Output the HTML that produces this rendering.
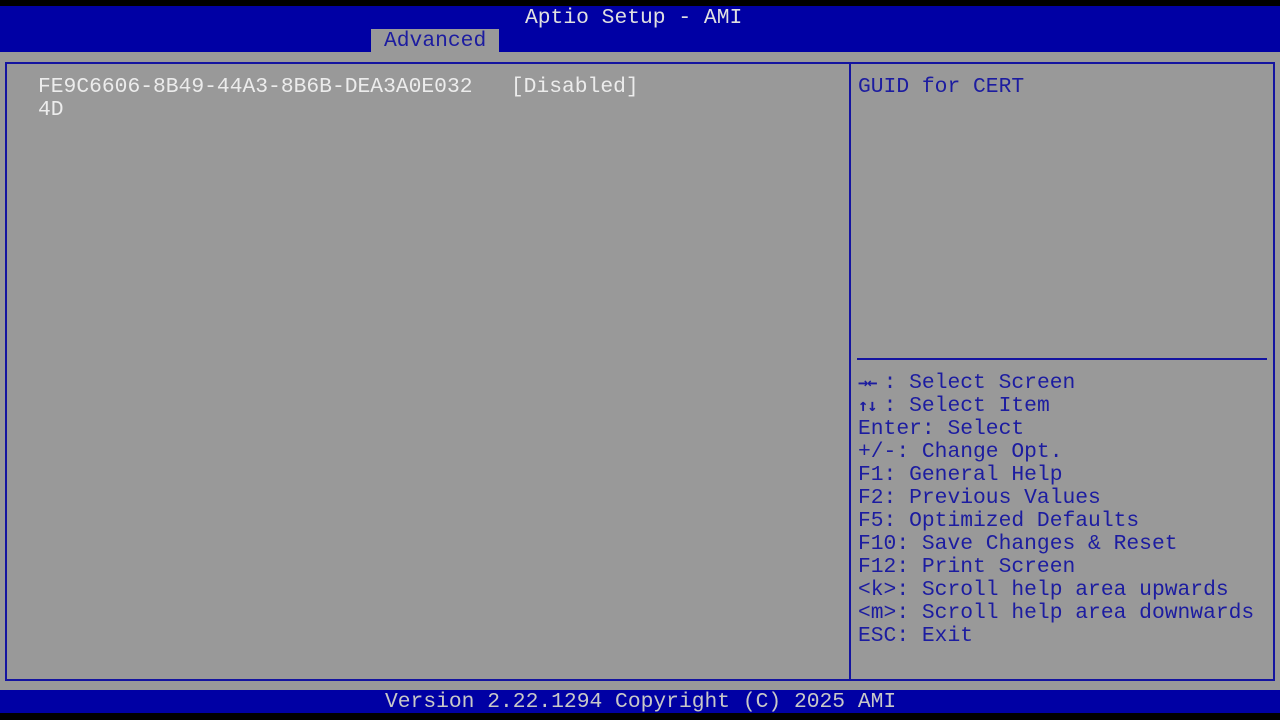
<!DOCTYPE html>
<html><head><style>
body{margin:0;width:1280px;height:720px;background:#000;position:relative;overflow:hidden;font-family:"Liberation Mono","DejaVu Sans Mono",monospace;font-size:21.3px;}
div{position:absolute;}
.t{line-height:23px;white-space:pre;}
.a{display:inline-block;width:25.6px;font-family:"DejaVu Sans Mono",monospace;font-weight:bold;font-size:17px;letter-spacing:-1px;}
</style></head><body>
<div style="left:0;top:6px;width:1280px;height:46px;background:#0000a4"></div>
<div class="t" style="left:525px;top:7px;color:#e0e0e0">Aptio Setup - AMI</div>
<div style="left:371px;top:29px;width:128px;height:23px;background:#999"></div>
<div class="t" style="left:384px;top:30px;color:#1c1ca0">Advanced</div>
<div style="left:0;top:52px;width:1280px;height:638px;background:#999"></div>
<div style="left:5px;top:62px;width:1266px;height:615px;border:2px solid #1414a0"></div>
<div style="left:849px;top:62px;width:2px;height:617px;background:#1414a0"></div>
<div style="left:857px;top:358px;width:410px;height:2px;background:#1414a0"></div>
<div class="t" style="left:38px;top:76px;color:#ececec">FE9C6606-8B49-44A3-8B6B-DEA3A0E032   [Disabled]
4D</div>
<div class="t" style="left:858px;top:76px;color:#1c1ca0">GUID for CERT</div>
<div class="t" style="left:858px;top:372px;color:#1c1ca0"><span class="a">→←</span>: Select Screen
<span class="a">↑↓</span>: Select Item
Enter: Select
+/-: Change Opt.
F1: General Help
F2: Previous Values
F5: Optimized Defaults
F10: Save Changes &amp; Reset
F12: Print Screen
&lt;k&gt;: Scroll help area upwards
&lt;m&gt;: Scroll help area downwards
ESC: Exit</div>
<div style="left:0;top:690px;width:1280px;height:23px;background:#0000a4"></div>
<div class="t" style="left:385px;top:691px;color:#c8c8c8">Version 2.22.1294 Copyright (C) 2025 AMI</div>
</body></html>
